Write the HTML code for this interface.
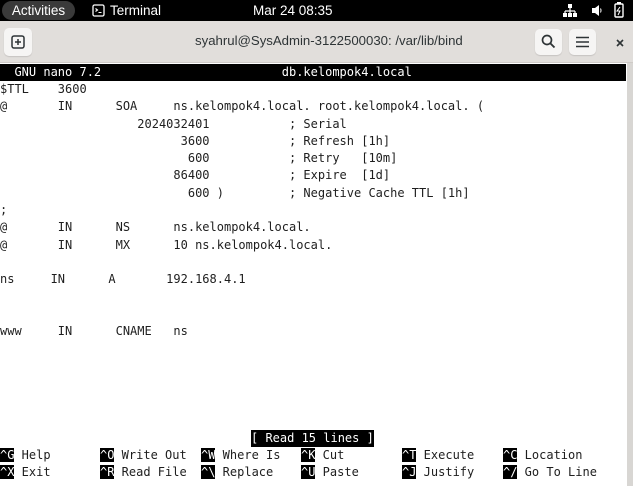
<!DOCTYPE html>
<html><head><meta charset="utf-8"><style>
*{margin:0;padding:0;box-sizing:border-box}
body{width:633px;height:486px;overflow:hidden;background:#fff;position:relative;font-family:"Liberation Sans","DejaVu Sans",sans-serif}
#top{position:absolute;left:0;top:0;width:633px;height:21px;background:#000;color:#fff;font-size:13.5px}
#act{position:absolute;left:2px;top:1px;width:73px;height:19px;border-radius:10px;background:#3a3a3a;text-align:center;line-height:19px}
#hdr{position:absolute;left:0;top:21px;width:633px;height:42px;background:#e1dedb;border-bottom:1px solid #cfcbc7}
.btn{position:absolute;background:#f6f5f4;border-radius:5px;box-shadow:0 1px 1px rgba(0,0,0,.12)}
.mono{font-family:"DejaVu Sans Mono","Liberation Mono",monospace;font-size:12px}
pre{position:absolute;left:0;top:63.5px;line-height:17.3px;color:#1e1e1e;white-space:pre}
.row{position:absolute;height:17px;line-height:17px;white-space:pre;color:#1e1e1e}
.k{background:#000;color:#fff}
</style></head><body>
<div id="top">
 <div id="act">Activities</div>
 <svg style="position:absolute;left:92px;top:4px" width="13" height="13" viewBox="0 0 13 13"><rect x="1" y="1" width="11" height="11" rx="1.5" fill="none" stroke="#fff" stroke-width="1.3"/><path d="M3.5 4.5l2 1.5-2 1.5M6.5 8.5h3" stroke="#fff" stroke-width="1.1" fill="none"/></svg>
 <div style="position:absolute;left:110px;top:3px">Terminal</div>
 <div style="position:absolute;left:253px;top:3px">Mar 24 08:35</div>
 <svg style="position:absolute;left:563px;top:4px" width="14" height="13" viewBox="0 0 14 13"><rect x="5" y="0" width="4" height="4" fill="#fff"/><path d="M7 4v3M2 7h10M2 7v2M12 7v2M7 7v2" stroke="#fff" stroke-width="1.2"/><rect x="0" y="9" width="4" height="4" fill="#fff"/><rect x="5" y="9" width="4" height="4" fill="#fff"/><rect x="10" y="9" width="4" height="4" fill="#fff"/></svg>
 <svg style="position:absolute;left:592px;top:4px" width="10" height="13" viewBox="0 0 10 13"><path d="M0 4h3l4-3v11l-4-3H0z" fill="#fff"/><path d="M8.5 4.5q1 2 0 4" stroke="#fff" fill="none"/></svg>
 <svg style="position:absolute;left:614px;top:2px" width="10" height="16" viewBox="0 0 10 16"><rect x="3" y="0" width="4" height="2" fill="#fff"/><rect x="1" y="2" width="8" height="13" rx="1" fill="none" stroke="#fff" stroke-width="1.4"/><path d="M6 5l-3 4h3l-2 4" stroke="#fff" fill="none"/></svg>
</div>
<div id="hdr">
 <div class="btn" style="left:4px;top:7px;width:28px;height:28px"><svg style="position:absolute;left:7px;top:7px" width="14" height="14" viewBox="0 0 14 14"><rect x="1" y="1" width="12" height="12" rx="2" fill="none" stroke="#2e3436" stroke-width="1.5"/><path d="M7 4v6M4 7h6" stroke="#2e3436" stroke-width="1.5"/></svg></div>
 <div style="position:absolute;left:195px;top:12px;width:243px;font-size:13.2px;color:#2e3436;white-space:nowrap">syahrul@SysAdmin-3122500030: /var/lib/bind</div>
 <div class="btn" style="left:535px;top:8px;width:27px;height:26px"><svg style="position:absolute;left:6px;top:5px" width="15" height="15" viewBox="0 0 15 15"><circle cx="6" cy="6" r="4.5" fill="none" stroke="#2e3436" stroke-width="1.7"/><path d="M9.5 9.5l4 4" stroke="#2e3436" stroke-width="1.9"/></svg></div>
 <div class="btn" style="left:569px;top:8px;width:27px;height:26px"><svg style="position:absolute;left:7px;top:7px" width="13" height="12" viewBox="0 0 13 12"><path d="M0 1.5h13M0 6h13M0 10.5h13" stroke="#2e3436" stroke-width="1.6"/></svg></div>
 <svg style="position:absolute;left:616px;top:18px" width="8" height="8" viewBox="0 0 8 8"><path d="M1 1l6 6M7 1l-6 6" stroke="#2e3436" stroke-width="1.6"/></svg>
</div>
<div style="position:absolute;left:627px;top:63px;width:6px;height:423px;background:#d8d6d3"></div>
<div style="position:absolute;left:0;top:64px;width:626px;height:17px;background:#000"></div>
<div class="row mono" style="left:0;top:64px;color:#fff">  GNU nano 7.2                         db.kelompok4.local</div>
<pre class="mono" style="top:81px">$TTL    3600
@       IN      SOA     ns.kelompok4.local. root.kelompok4.local. (
                   2024032401           ; Serial
                         3600           ; Refresh [1h]
                          600           ; Retry   [10m]
                        86400           ; Expire  [1d]
                          600 )         ; Negative Cache TTL [1h]
;
@       IN      NS      ns.kelompok4.local.
@       IN      MX      10 ns.kelompok4.local.

ns     IN      A       192.168.4.1


www     IN      CNAME   ns</pre>
<div class="row mono k" style="left:251px;top:430px">[ Read 15 lines ]</div>
<div class="row mono" style="left:0;top:447px"><span class="k">^G</span> Help</div>
<div class="row mono" style="left:0;top:464px"><span class="k">^X</span> Exit</div>
<div class="row mono" style="left:100px;top:447px"><span class="k">^O</span> Write Out</div>
<div class="row mono" style="left:100px;top:464px"><span class="k">^R</span> Read File</div>
<div class="row mono" style="left:201px;top:447px"><span class="k">^W</span> Where Is</div>
<div class="row mono" style="left:201px;top:464px"><span class="k">^\</span> Replace</div>
<div class="row mono" style="left:301px;top:447px"><span class="k">^K</span> Cut</div>
<div class="row mono" style="left:301px;top:464px"><span class="k">^U</span> Paste</div>
<div class="row mono" style="left:402px;top:447px"><span class="k">^T</span> Execute</div>
<div class="row mono" style="left:402px;top:464px"><span class="k">^J</span> Justify</div>
<div class="row mono" style="left:503px;top:447px"><span class="k">^C</span> Location</div>
<div class="row mono" style="left:503px;top:464px"><span class="k">^/</span> Go To Line</div>
</body></html>
